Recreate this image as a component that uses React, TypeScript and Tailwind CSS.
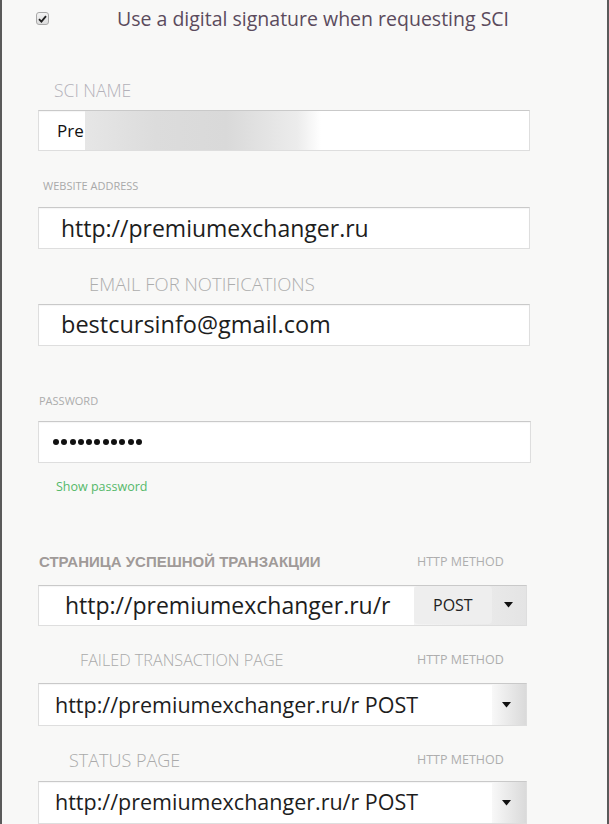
import React from "react";

const Arrow = () => (
  <svg width="9" height="6" viewBox="0 0 9 6" className="block">
    <path d="M0 0 H9 L4.5 5.5 Z" fill="#111" />
  </svg>
);

function Dots() {
  return (
    <div className="flex items-center gap-[2.3px]">
      {Array.from({ length: 11 }).map((_, i) => (
        <span key={i} className="block w-[6px] h-[6px] rounded-full bg-[#111]" />
      ))}
    </div>
  );
}

export default function App() {
  const font = { fontFamily: '"Open Sans", "Noto Sans", sans-serif' };
  const inputBase =
    "bg-white border border-[#dedede] border-t-[#c9c9c9] shadow-[inset_0_1px_1px_rgba(0,0,0,0.04)] flex items-center";
  return (
    <div
      className="w-full h-[824px] overflow-hidden bg-[#f8f8f7] border-l-2 border-r-2 border-[#5a5a5a] flex flex-col"
      style={font}
    >
      {/* checkbox row */}
      <div className="mt-[4px] h-[30px] flex items-center">
        <span className="ml-[34px] w-[13px] h-[13px] rounded-[3px] border border-[#a8a8a8] bg-gradient-to-b from-[#f4f4f4] to-[#dcdcdc] flex items-center justify-center">
          <svg width="9" height="8" viewBox="0 0 9 8">
            <path d="M1 4.2 L3.4 6.6 L8 1.2" stroke="#222" strokeWidth="1.8" fill="none" />
          </svg>
        </span>
        <span className="ml-[68px] text-[19.5px] leading-[24px] text-[#5b4b5d]">
          Use a digital signature when requesting SCI
        </span>
      </div>

      {/* SCI NAME */}
      <div className="mt-[46px] h-[20px] pl-[52px] text-[17.5px] leading-[20px] text-[#b3b1b9] font-light">
        SCI NAME
      </div>
      <div className={`mt-[10px] ml-[36px] w-[492px] h-[42px] ${inputBase} bg-[#fbfbfb] overflow-hidden`}>
        <span className="h-full flex items-center pl-[18px] pr-[1px] text-[17px] text-[#111]">Pre</span>
        <span className="h-full w-[236px] bg-[linear-gradient(90deg,#e6e6e6_0%,#dcdcdc_30%,#d9d9d9_60%,#ececec_90%,#ffffff_100%)]" />
        <span className="flex-1 h-full bg-white" />
      </div>

      {/* WEBSITE ADDRESS */}
      <div className="mt-[28px] h-[14px] pl-[41px] text-[11px] leading-[14px] text-[#a9a9a9]">
        WEBSITE ADDRESS
      </div>
      <div className={`mt-[14px] ml-[36px] w-[492px] h-[42px] ${inputBase}`}>
        <span className="pl-[22px] text-[23px] text-[#1d1d1d]">http://premiumexchanger.ru</span>
      </div>

      {/* EMAIL */}
      <div className="mt-[25px] h-[20px] pl-[87px] text-[18.5px] leading-[20px] text-[#adadad] font-light">
        EMAIL FOR NOTIFICATIONS
      </div>
      <div className={`mt-[10px] ml-[36px] w-[492px] h-[42px] ${inputBase}`}>
        <span className="pl-[22px] text-[23.5px] text-[#1d1d1d]">bestcursinfo@gmail.com</span>
      </div>

      {/* PASSWORD */}
      <div className="mt-[48px] h-[14px] pl-[37px] text-[11px] leading-[14px] text-[#acacac]">
        PASSWORD
      </div>
      <div className={`mt-[13px] ml-[36px] w-[493px] h-[42px] ${inputBase}`}>
        <div className="pl-[14px]">
          <Dots />
        </div>
      </div>
      <div className="mt-[16px] h-[16px] pl-[54px] text-[12.5px] leading-[16px] text-[#55b96a]">
        Show password
      </div>

      {/* SUCCESS PAGE */}
      <div className="mt-[58px] h-[20px] flex items-center">
        <span
          className="w-[415px] pl-[37px] text-[15px] font-bold text-[#a09a98]"
          style={{ fontFamily: '"Liberation Sans", Arial, sans-serif' }}
        >
          СТРАНИЦА УСПЕШНОЙ ТРАНЗАКЦИИ
        </span>
        <span className="text-[12.5px] text-[#aeaeae]">HTTP METHOD</span>
      </div>
      <div className={`mt-[12px] ml-[36px] w-[489px] h-[42px] ${inputBase} overflow-hidden`}>
        <span className="pl-[26px] w-[375px] text-[23px] text-[#1d1d1d] whitespace-nowrap [text-shadow:0_0_3px_#fff]">
          http://premiumexchanger.ru/r
        </span>
        <div className="flex-1 h-full flex items-center bg-gradient-to-r from-[#f4f4f4] to-[#e4e4e4]">
          <span className="h-[38px] w-[78px] rounded-[4px] bg-[#eeeeee] flex items-center pl-[19px] text-[16px] text-[#222]">
            POST
          </span>
          <span className="ml-[12px]">
            <Arrow />
          </span>
        </div>
      </div>

      {/* FAILED */}
      <div className="mt-[24px] h-[20px] flex items-center">
        <span className="w-[415px] pl-[78px] text-[16.2px] text-[#aaaaaa] font-light">
          FAILED TRANSACTION PAGE
        </span>
        <span className="text-[12.5px] text-[#aeaeae]">HTTP METHOD</span>
      </div>
      <div className={`mt-[13px] ml-[36px] w-[489px] h-[43px] ${inputBase} overflow-hidden`}>
        <span className="flex-1 pl-[16px] text-[21.5px] text-[#1d1d1d] whitespace-nowrap [text-shadow:0_0_3px_#fff]">
          http://premiumexchanger.ru/r POST
        </span>
        <div className="w-[34px] h-full flex items-center bg-gradient-to-r from-[#f8f8f8] to-[#dadada]">
          <span className="ml-[10px]">
            <Arrow />
          </span>
        </div>
      </div>

      {/* STATUS */}
      <div className="mt-[24px] h-[20px] flex items-center">
        <span className="w-[415px] pl-[67px] text-[18px] text-[#aaaaaa] font-light">
          STATUS PAGE
        </span>
        <span className="text-[12.5px] text-[#aeaeae]">HTTP METHOD</span>
      </div>
      <div className={`mt-[11px] ml-[36px] w-[489px] h-[43px] shrink-0 ${inputBase} overflow-hidden`}>
        <span className="flex-1 pl-[16px] text-[21.5px] text-[#1d1d1d] whitespace-nowrap [text-shadow:0_0_3px_#fff]">
          http://premiumexchanger.ru/r POST
        </span>
        <div className="w-[34px] h-full flex items-center bg-gradient-to-r from-[#f8f8f8] to-[#dadada]">
          <span className="ml-[10px]">
            <Arrow />
          </span>
        </div>
      </div>
    </div>
  );
}
